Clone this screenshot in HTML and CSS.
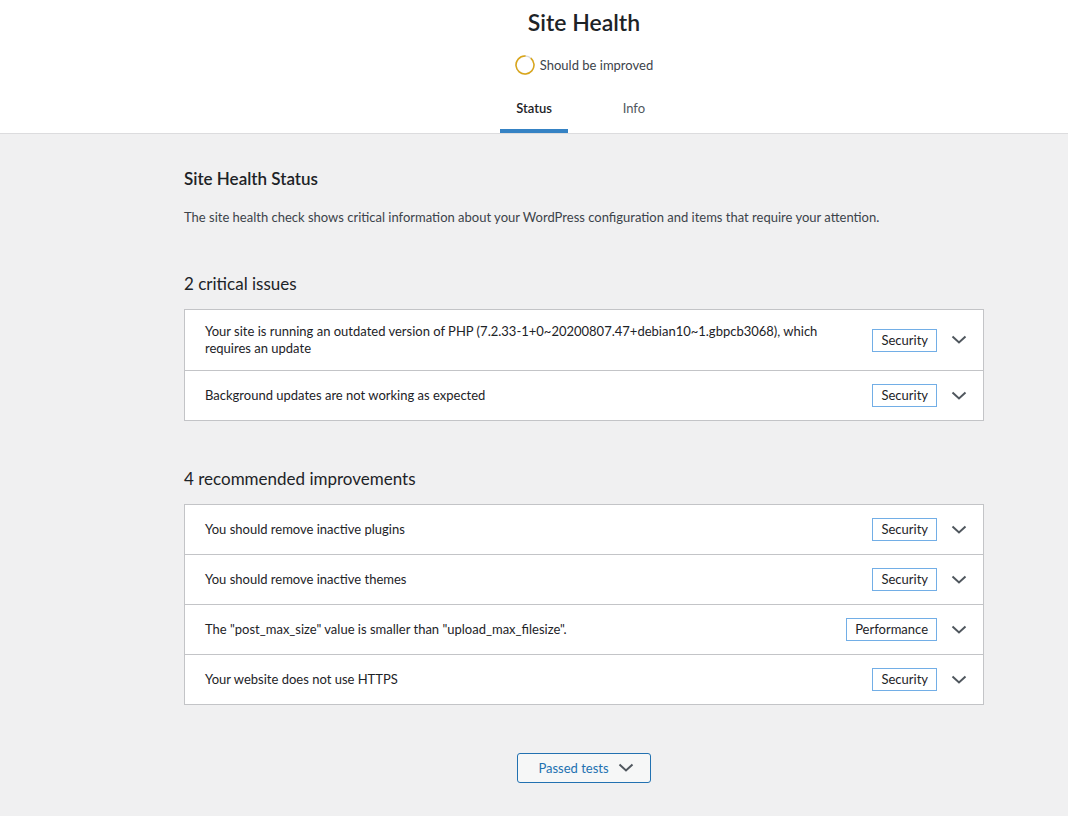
FILE: index.html
```html
<!DOCTYPE html>
<html lang="en">
<head>
    <meta charset="UTF-8">
    <meta name="viewport" content="width=device-width, initial-scale=1.0">
    <title>Site Health</title>
    <link rel="stylesheet" href="styles.css">
</head>
<body>
    <!-- Header -->
    <header class="health-header">
        <div class="health-header-inner">
            <h1>Site Health</h1>
            <div class="health-progress">
                <svg class="progress-ring" width="20" height="20" viewBox="0 0 20 20">
                    <circle cx="10" cy="10" r="9" fill="none" stroke="#dcdcde" stroke-width="1.5"/>
                    <circle cx="10" cy="10" r="9" fill="none" stroke="#dba617" stroke-width="1.5"
                            stroke-dasharray="56.5" stroke-dashoffset="6" transform="rotate(-50 10 10)"/>
                </svg>
                <span>Should be improved</span>
            </div>
            <nav class="health-tabs">
                <a class="health-tab active" href="#">Status</a>
                <a class="health-tab" href="#">Info</a>
            </nav>
        </div>
    </header>

    <!-- Main Content -->
    <main class="health-body">
        <h2>Site Health Status</h2>
        <p class="intro">The site health check shows critical information about your WordPress configuration and items that require your attention.</p>

        <!-- Critical issues -->
        <section class="issues">
            <h3>2 critical issues</h3>
            <div class="accordion">
                <div class="accordion-row">
                    <span class="title">Your site is running an outdated version of PHP (7.2.33-1+0~20200807.47+debian10~1.gbpcb3068), which requires an update</span>
                    <span class="badge">Security</span>
                    <svg class="chevron" width="16" height="10" viewBox="0 0 16 10"><polyline points="1.5,1.5 8,7.5 14.5,1.5"/></svg>
                </div>
                <div class="accordion-row">
                    <span class="title">Background updates are not working as expected</span>
                    <span class="badge">Security</span>
                    <svg class="chevron" width="16" height="10" viewBox="0 0 16 10"><polyline points="1.5,1.5 8,7.5 14.5,1.5"/></svg>
                </div>
            </div>
        </section>

        <!-- Recommended improvements -->
        <section class="issues">
            <h3>4 recommended improvements</h3>
            <div class="accordion">
                <div class="accordion-row">
                    <span class="title">You should remove inactive plugins</span>
                    <span class="badge">Security</span>
                    <svg class="chevron" width="16" height="10" viewBox="0 0 16 10"><polyline points="1.5,1.5 8,7.5 14.5,1.5"/></svg>
                </div>
                <div class="accordion-row">
                    <span class="title">You should remove inactive themes</span>
                    <span class="badge">Security</span>
                    <svg class="chevron" width="16" height="10" viewBox="0 0 16 10"><polyline points="1.5,1.5 8,7.5 14.5,1.5"/></svg>
                </div>
                <div class="accordion-row">
                    <span class="title">The "post_max_size" value is smaller than "upload_max_filesize".</span>
                    <span class="badge">Performance</span>
                    <svg class="chevron" width="16" height="10" viewBox="0 0 16 10"><polyline points="1.5,1.5 8,7.5 14.5,1.5"/></svg>
                </div>
                <div class="accordion-row">
                    <span class="title">Your website does not use HTTPS</span>
                    <span class="badge">Security</span>
                    <svg class="chevron" width="16" height="10" viewBox="0 0 16 10"><polyline points="1.5,1.5 8,7.5 14.5,1.5"/></svg>
                </div>
            </div>
        </section>

        <div class="passed">
            <button class="passed-button">Passed tests
                <svg class="chevron" width="16" height="10" viewBox="0 0 16 10"><polyline points="1.5,1.5 8,7.5 14.5,1.5"/></svg>
            </button>
        </div>
    </main>
</body>
</html>
```

FILE: styles.css
```css
/* Global Styles */
body {
    font-family: Lato, "Open Sans", sans-serif;
    font-size: 13px;
    margin: 0;
    padding: 0;
    background-color: #f0f0f1;
    color: #3c434a;
}

/* Header */
.health-header {
    background-color: #fff;
    border-bottom: 1px solid #dcdcde;
}

.health-header-inner {
    padding-left: 100px;
    display: flex;
    flex-direction: column;
    align-items: center;
}

.health-header h1 {
    margin: 0;
    padding-top: 8px;
    font-size: 23px;
    font-weight: 600;
    line-height: 29px;
    color: #1d2327;
}

.health-progress {
    display: flex;
    align-items: center;
    gap: 5px;
    margin-top: 18px;
    height: 20px;
    color: #3c434a;
}

.progress-ring {
    display: block;
}

.health-tabs {
    display: grid;
    grid-template-columns: 1fr 1fr;
    margin-top: 18px;
}

.health-tab {
    display: block;
    margin: 0 16px;
    padding: 6px 16px 16px;
    line-height: 18px;
    text-align: center;
    text-decoration: none;
    color: #50575e;
}

.health-tab.active {
    box-shadow: inset 0 -4px #3582c4;
    font-weight: 600;
    color: #1d2327;
}

/* Body */
.health-body {
    max-width: 800px;
    margin: 0 auto;
    padding: 33px 0 40px 100px;
    box-sizing: content-box;
}

.health-body h2 {
    margin: 0;
    font-size: 17px;
    font-weight: 600;
    line-height: 24px;
    color: #1d2327;
}

.intro {
    margin: 17px 0 0;
    line-height: 18px;
}

.issues h3 {
    margin: 46px 0 13px;
    font-size: 17px;
    font-weight: 400;
    line-height: 24px;
    color: #1d2327;
}

.accordion {
    background-color: #fff;
    border: 1px solid #c3c4c7;
}

.accordion-row {
    display: flex;
    align-items: center;
    padding: 13px 16px 13px 20px;
    color: #1d2327;
}

.accordion-row + .accordion-row {
    border-top: 1px solid #c3c4c7;
}

.accordion-row .title {
    flex: 1;
    line-height: 17px;
    padding-right: 30px;
}

.badge {
    border: 1px solid #72aee6;
    padding: 0 8px;
    line-height: 21px;
    color: #1d2327;
    white-space: nowrap;
}

.chevron {
    display: block;
    flex-shrink: 0;
    fill: none;
    stroke: #50575e;
    stroke-width: 2;
}

.accordion-row .chevron {
    margin-left: 14px;
}

/* Passed tests */
.passed {
    display: flex;
    justify-content: center;
    margin-top: 48px;
}

.passed-button {
    display: flex;
    align-items: center;
    gap: 9px;
    height: 30px;
    padding: 0 16px 0 20px;
    font-family: inherit;
    font-size: 13px;
    color: #2271b1;
    background-color: #f6f7f7;
    border: 1px solid #2271b1;
    border-radius: 3px;
    cursor: pointer;
}

.passed-button .chevron {
    stroke: #50575e;
}
```
